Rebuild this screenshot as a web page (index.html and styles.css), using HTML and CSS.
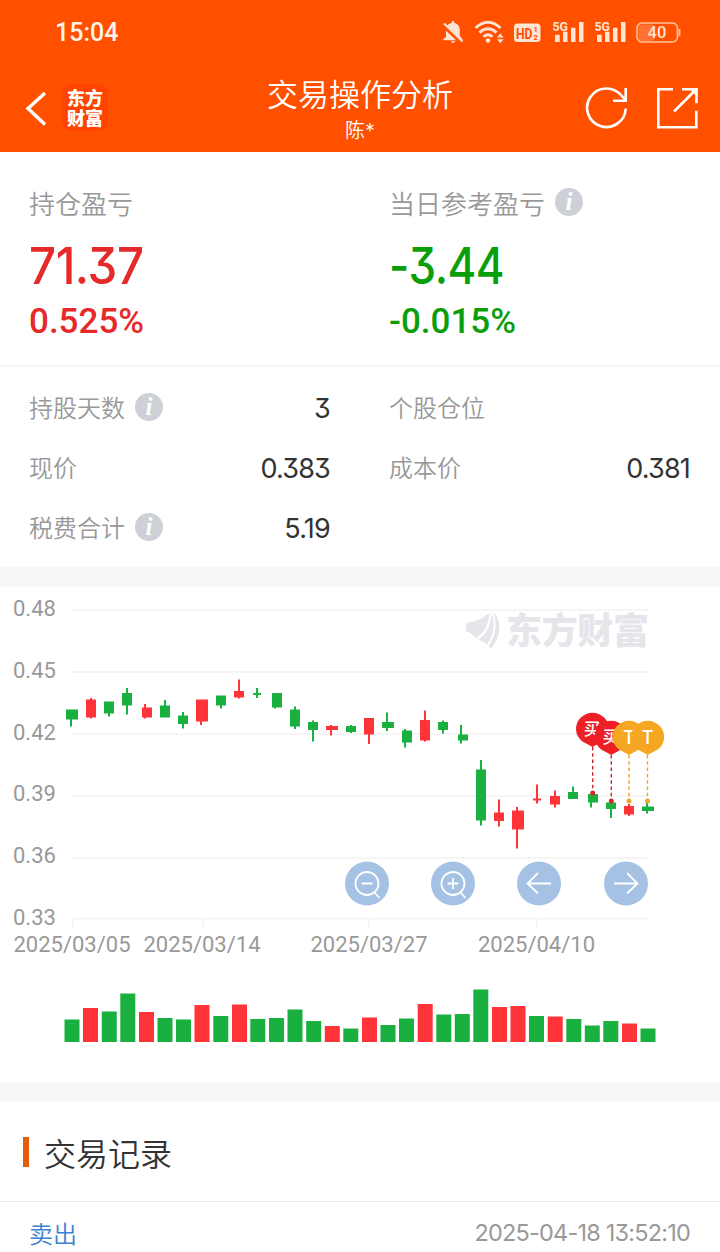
FILE: index.html
```html
<!DOCTYPE html>
<html lang="zh-CN">
<head>
<meta charset="utf-8">
<title>交易操作分析</title>
<link rel="stylesheet" href="styles.css">
</head>
<body>
<header class="header">
  <div class="status">
    <span class="clock">15:04</span>
    <svg class="status-icons" width="242" height="30" viewBox="440 17 242 30">
      <g fill="#ffe3d4">
        <path d="M446 37v-7c0-4 2.500-6.500 5.800-7.300 0-1.200.5-1.900 1.200-1.900s1.200.7 1.200 1.900c3.300.8 5.600 3.500 5.600 7.300v6l2.700 3v1.200h-19.300v-1.200z"/>
        <path d="M451 41.300h4.200c-.3 1.100-1 1.700-2.100 1.700s-1.800-.6-2.100-1.700z"/>
        <path d="M442.500 24.500l19 18" stroke="#ff5000" stroke-width="4"/>
        <path d="M444 23.500l18.500 18" stroke="#ffe3d4" stroke-width="2"/>
        <circle cx="488" cy="40.500" r="2.300"/>
        <path d="M497 37.400l3.300-4 3.300 4zM497 39.200l3.300 4 3.300-4z"/>
        <rect x="514" y="23.500" width="26.500" height="18.500" rx="3.500"/>
        <path d="M555 34.800h4.700V42H555zM563 31.800h4.500V42H563zM571 27.800h4.500V42H571zM579 22h4.500v20H579z"/>
        <path d="M597 34.800h4.700V42H597zM605 31.800h4.500V42H605zM613 27.800h4.500V42H613zM621 22h4.500v20H621z"/>
      </g>
      <g fill="none" stroke="#ffe3d4" stroke-width="2.800">
        <path d="M475.500 28q12.500-11.500 25 0M479.500 32.600q8.500-7.600 17 0M483.600 36.800q4.400-4 8.800 0"/>
      </g>
      <g class="status-type">
        <text x="516" y="38.500" font-size="15" fill="#ff5000" textLength="16.500" lengthAdjust="spacingAndGlyphs">HD</text>
        <text x="533.500" y="31.500" font-size="7.500" fill="#ff5000">1</text>
        <text x="533.500" y="40.300" font-size="7.500" fill="#ff5000">2</text>
        <text x="552.500" y="31" font-size="13.500" fill="#ffe3d4" textLength="15.500" lengthAdjust="spacingAndGlyphs">5G</text>
        <text x="594.500" y="31" font-size="13.500" fill="#ffe3d4" textLength="15.500" lengthAdjust="spacingAndGlyphs">5G</text>
      </g>
      <rect x="638.500" y="24.500" width="16" height="16.500" rx="3" fill="#ff7031"/>
      <rect x="637" y="23" width="40.500" height="19" rx="5" fill="none" stroke="#ffc39c" stroke-width="1.600"/>
      <path d="M679.500 29v7" stroke="#ffc39c" stroke-width="1.800"/>
      <text class="battery-text" x="647.500" y="38" fill="#ffe3d4" textLength="19">40</text>
    </svg>
  </div>
  <div class="nav">
    <svg class="back" width="24" height="38" viewBox="24 90 24 38"><path d="M45 93L28 108.500 45 124.500" fill="none" stroke="#fff" stroke-width="3.400"/></svg>
    <div class="brand">东方财富</div>
    <div class="titles">
      <h1 class="title">交易操作分析</h1>
      <p class="subtitle">陈*</p>
    </div>
    <svg class="actions" width="116" height="46" viewBox="584 85 116 46" fill="none" stroke="#fff" stroke-width="2.600">
      <path d="M625.700 108.500a19.300 19.300 0 1 1-4.200-12.800l4 4"/>
      <path d="M625.700 88v12.700H613"/>
      <path d="M673 89.300h-14.700v38h38v-16.500M682 89.300h14.500v14M674 111.500l22-22"/>
      <path d="M696.500 89.500l-6 .5 6 6z" fill="#fff" stroke="none"/>
    </svg>
  </div>
</header>

<section class="summary">
  <div class="metric red">
    <div class="metric-label">持仓盈亏</div>
    <div class="metric-value">71.37</div>
    <div class="metric-rate">0.525%</div>
  </div>
  <div class="metric green">
    <div class="metric-label">当日参考盈亏 <span class="info">i</span></div>
    <div class="metric-value value-down">-3.44</div>
    <div class="metric-rate">-0.015%</div>
  </div>
</section>

<section class="details">
  <div class="detail"><span class="detail-label">持股天数</span><span class="info">i</span><span class="detail-value">3</span></div>
  <div class="detail"><span class="detail-label">个股仓位</span></div>
  <div class="detail"><span class="detail-label">现价</span><span class="detail-value">0.383</span></div>
  <div class="detail"><span class="detail-label">成本价</span><span class="detail-value">0.381</span></div>
  <div class="detail"><span class="detail-label">税费合计</span><span class="info">i</span><span class="detail-value">5.19</span></div>
</section>

<section class="chart">
  <svg width="720" height="495" viewBox="0 587 720 495">
    <path class="grid" d="M72 610H648M72 672H648M72 734H648M72 796H648M72 858H648M72 918.500H648M73 918v11M203 918v11M369 918v11M537 918v11"/>
    <g class="axis">
      <text x="13" y="616">0.48</text><text x="13" y="678">0.45</text><text x="13" y="740">0.42</text>
      <text x="13" y="801">0.39</text><text x="13" y="863">0.36</text><text x="13" y="925">0.33</text>
      <text x="13.500" y="952.300" textLength="117">2025/03/05</text><text x="143.500" y="952.300" textLength="117">2025/03/14</text>
      <text x="310.500" y="952.300" textLength="117">2025/03/27</text><text x="478" y="952.300" textLength="117">2025/04/10</text>
    </g>
    <g fill="#e5e5ea">
      <path d="M466 623C475 622 482 619 489.500 612.500 488.500 624 485 632 476 638.500 473 634.500 470 632 466 631z"/>
      <path d="M478 640C487 634 491 625 491.300 613 496 625 493 636 487 644.500 485 642.500 482 641 478 640z"/>
      <path d="M493 612C501 619 502.500 634 491.500 648.500L488.500 646C496 635 497.500 624 493 612z"/>
      <text class="watermark" x="506" y="644" textLength="143">东方财富</text>
    </g>
    <path class="up" d="M86 699.500h10v18H86zM90 698h2v20.500h-2zM142 707.500h10v10h-10zM144 704h2v14.500h-2zM196 699.500h12v22h-12zM200 699.500h2v25.500h-2zM234 691h10v6.500h-10zM238 679.500h2v19h-2zM326 726h12v4h-12zM330 725h2v10.500h-2zM364 718h10v16.500h-10zM368 718h2v26h-2zM420 720h10v20.500h-10zM424 710.500h2v31h-2zM494 812.500h10v8.500h-10zM498 799.500h2v27h-2zM512 810.500h12v19h-12zM516 807h2v41.500h-2zM533 798.500h8v2h-8zM536 784.500h2v19h-2zM550 796h10v8.500h-10zM554 790.500h2v17h-2zM624 806h10v8.500h-10zM628 804h2v12h-2z"/>
    <path class="down" d="M66 709.500h12v10H66zM70 709.500h2v17h-2zM104 701.500h10v12h-10zM108 701.500h2v15h-2zM122 693h10v12.500h-10zM126 688h2v26.500h-2zM160 705.500h10v12h-10zM164 700h2v17h-2zM178 715.500h10v8.500h-10zM182 712h2v16.500h-2zM216 695.500h10v10h-10zM220 695.500h2v13h-2zM253 693h8v2h-8zM256 688h2v10h-2zM272 693h10v14.500h-10zM274 693h2v15.500h-2zM290 709.500h10v17h-10zM294 706.500h2v22.500h-2zM308 722h10v8h-10zM312 720.500h2v21h-2zM346 726h10v6h-10zM350 725h2v8h-2zM382 722h12v6h-12zM386 712.500h2v18.500h-2zM402 730.500h10v12h-10zM404 729h2v18.500h-2zM438 722h10v8h-10zM442 720.500h2v13h-2zM458 734.500h10v6h-10zM460 725h2v18.500h-2zM476 769.500h10v51h-10zM480 760h2v65.500h-2zM568 792h10v7h-10zM572 786.500h2v12.500h-2zM588 794h10v8.500h-10zM590 794h2v13.500h-2zM606 802.500h10v6.500h-10zM610 802.500h2v15.500h-2zM642 806.500h12v4.500h-12zM646 803h2v10.500h-2z"/>
    <g fill="none" stroke-width="1.400" stroke-dasharray="3.500 2.800">
      <path d="M592.700 747v44M611.300 755v44" stroke="#c8282a"/>
      <path d="M629 755v44M647.500 755v44" stroke="#eda525"/>
    </g>
    <circle cx="592.700" cy="793" r="2.500" fill="#d8262a"/><circle cx="611.300" cy="801" r="2.500" fill="#d8262a"/>
    <circle cx="629" cy="801" r="2.500" fill="#f0a52a"/><circle cx="647.500" cy="801" r="2.500" fill="#f0a52a"/>
    <g class="pin">
      <path fill="#ee1f25" d="M592.500 747l-10-5.500a16.500 16 0 1 1 20 0z"/><text x="592" y="735" font-size="16.500">买</text>
      <path fill="#ee1f25" d="M611.200 755l-10-5.500a16.500 16 0 1 1 20 0z"/><text x="610.700" y="743" font-size="16.500">买</text>
      <path fill="#f5a623" d="M629 755l-10-5.500a16.500 16 0 1 1 20 0z"/><text x="629" y="743.500" font-size="18">T</text>
      <path fill="#f5a623" d="M647.700 755l-10-5.500a16.500 16 0 1 1 20 0z"/><text x="647.700" y="743.500" font-size="18">T</text>
    </g>
    <g fill="#a5c2e4"><circle cx="367" cy="883.500" r="22"/><circle cx="453" cy="883.500" r="22"/><circle cx="539" cy="883.500" r="22"/><circle cx="626" cy="883.500" r="22"/></g>
    <g fill="none" stroke="#fff" stroke-width="1.800">
      <circle cx="367" cy="883.500" r="11.500"/><path d="M361.500 883.500h11M374.500 892.500l5 5.500"/>
      <circle cx="453" cy="883.500" r="11.500"/><path d="M447.500 883.500h11M453 878v11M460.500 892.500l5 5.500"/>
      <path d="M551 883.500h-23M538 873l-10.500 10.500L538 893.500M614 883.500h23M627 873l10.500 10.500L627 893.500"/>
    </g>
    <path class="up" d="M83 1008h15v34H83zM139 1012h15v30h-15zM194.500 1005h15v37h-15zM232 1004.500h15v37.500h-15zM324.800 1026h15v16h-15zM362 1017.500h15v24.500h-15zM417.700 1004h15v38h-15zM492 1007h15v35h-15zM510.500 1006h15v36h-15zM547.700 1016.500h15v25.500h-15zM622 1023.500h15v18.500h-15z"/>
    <path class="down" d="M64.500 1019.500h15v22.500h-15zM101.800 1011.500h15v30.500h-15zM120.300 993.500h15v48.500h-15zM157.500 1018h15v24h-15zM176 1019.500h15v22.500h-15zM213.300 1016h15v26h-15zM250.300 1019h15v23h-15zM269 1018h15v24h-15zM287.500 1009.500h15v32.500h-15zM306.200 1021h15v21h-15zM343.300 1028.500h15v13.500h-15zM380.500 1025h15v17h-15zM399 1018.500h15v23.500h-15zM436.300 1014.500h15v27.500h-15zM454.800 1014h15v28h-15zM473.300 989.500h15v52.500h-15zM529 1016h15v26h-15zM566.300 1019h15v23h-15zM584.800 1025.500h15v16.500h-15zM603.300 1021h15v21h-15zM640.500 1028.500h15v13.500h-15z"/>
  </svg>
</section>

<section class="records">
  <h2 class="records-title">交易记录</h2>
  <div class="record"><span class="record-type">卖出</span><time class="record-time">2025-04-18 13:52:10</time></div>
</section>
</body>
</html>
```

FILE: styles.css
```css
* { box-sizing: border-box; }
body {
  margin: 0;
  width: 720px;
  height: 1252px;
  overflow: hidden;
  background: #fff;
  color: #333;
  font-family: Inter, "Noto Sans CJK SC", sans-serif;
  font-feature-settings: "cv09";
}
h1, h2, p { margin: 0; font-weight: 350; }
svg { display: block; flex: none; }

.header { height: 152px; background: #ff5000; color: #fff; }
.status { display: flex; align-items: center; justify-content: space-between; height: 64px; padding: 0 38px 0 55px; }
.clock { padding-top: 1px; font-family: Roboto, sans-serif; font-size: 25px; font-weight: 500; line-height: 30px; color: #fff3ec; }
.status-type { font-family: Roboto, sans-serif; font-weight: 700; }
.battery-text { font-family: Roboto, sans-serif; font-size: 16.5px; font-weight: 500; }
.nav { display: grid; grid-template-columns: 24px 46px 1fr 116px; align-items: start; height: 88px; padding: 0 20px 0 24px; }
.back { margin-top: 26px; }
.brand {
  width: 46px; height: 47px; margin: 20px 0 0 14px; padding: 4px 3px 0 5px; border-radius: 10px; background: #ff4300;
  font-family: "Noto Sans CJK SC", sans-serif; font-size: 18px; font-weight: 900; line-height: 19.5px;
}
.titles { width: 300px; margin-left: 116px; text-align: center; }
.title { font-size: 31px; line-height: 44px; margin-top: 9px; }
.subtitle { font-size: 20px; line-height: 26px; margin-top: 1px; }
.actions { margin-top: 21px; }

.summary { display: grid; grid-template-columns: 1fr 1fr; height: 215px; padding-top: 31px; border-bottom: 2px solid #f5f5f5; }
.metric { padding-left: 29px; }
.metric-label { display: flex; align-items: center; gap: 10px; height: 38px; font-size: 26px; font-weight: 350; color: #999; white-space: nowrap; }
.metric-value { height: 60px; margin-top: 15px; font-size: 51px; line-height: 60px; font-weight: 500; letter-spacing: -.5px; transform: scaleX(.93); transform-origin: left; }
.value-down { transform: scaleX(.86); }
.metric-rate { height: 44px; margin-top: 4px; font-family: Roboto, sans-serif; font-size: 35px; line-height: 44px; font-weight: 500; }
.red { color: #e62a2a; }
.green { color: #0a9f0a; }
.info {
  display: grid; place-items: center; flex: none; width: 28px; height: 28px; border-radius: 50%;
  background: #cdd0d6; color: #fff; font: italic bold 25px/26px "Liberation Serif", serif;
}
.details { display: grid; grid-template-columns: 1fr 1fr; grid-auto-rows: 60px; height: 200px; padding-top: 11px; }
.detail { display: flex; align-items: center; padding: 0 30px 0 29px; }
.detail .info { margin-top: -2px; }
.detail-label { padding-top: 2px; margin-right: 10px; font-size: 24px; line-height: 36px; font-weight: 350; color: #999; }
.detail-value { margin-left: auto; font-size: 27px; letter-spacing: -.8px; }

.chart { height: 535px; border: solid #f7f7f7; border-width: 20px 0; }
.grid { fill: none; stroke: #f5f5f5; stroke-width: 2; }
.axis { font-family: Roboto, sans-serif; font-size: 22px; fill: #999; }
.watermark { font-family: "Noto Sans CJK SC", sans-serif; font-size: 36px; font-weight: 900; }
.up { fill: #ff3438; }
.down { fill: #1ab040; }
.pin text { fill: #fff; text-anchor: middle; font-weight: 500; }

.records-title { display: flex; align-items: center; gap: 15px; height: 99px; padding-left: 23px; font-size: 32px; }
.records-title::before { content: ""; width: 6px; height: 30px; background: #e35a0b; }
.record { display: flex; align-items: center; justify-content: space-between; height: 61px; padding: 0 30px 0 29px; border-top: 1px solid #ebebeb; }
.record-type { color: #3b82d0; font-size: 24px; font-weight: 350; }
.record-time { color: #999; font-size: 23.5px; font-weight: 400; letter-spacing: -.8px; }
```
